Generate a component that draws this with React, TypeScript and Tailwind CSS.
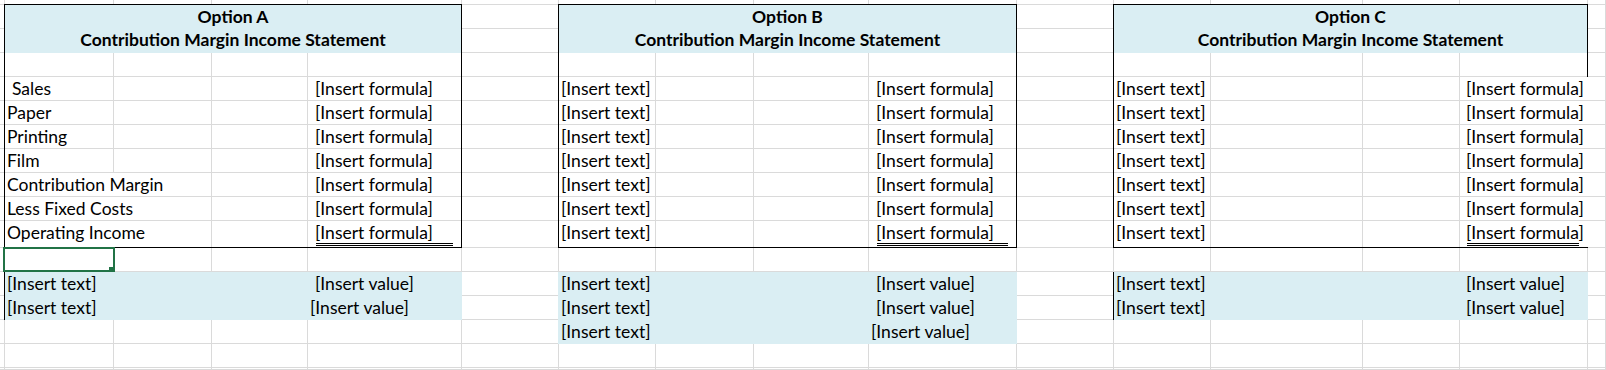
import React from "react";

const RS = [
  "",
  "row-start-1",
  "row-start-2",
  "row-start-3",
  "row-start-4",
  "row-start-5",
  "row-start-6",
  "row-start-7",
  "row-start-8",
  "row-start-9",
  "row-start-10",
  "row-start-11",
  "row-start-12",
  "row-start-13",
  "row-start-14",
  "row-start-15",
  "row-start-16",
  "row-start-17",
];
const CS = [
  "",
  "col-start-1",
  "col-start-2",
  "col-start-3",
  "col-start-4",
  "col-start-5",
  "col-start-6",
  "col-start-7",
  "col-start-8",
  "col-start-9",
  "col-start-10",
  "col-start-11",
  "col-start-12",
  "col-start-13",
  "col-start-14",
  "col-start-15",
  "col-start-16",
];

const GRID =
  "grid grid-cols-[5px_109px_98px_96px_154px_97px_97px_98px_115px_148px_97px_97px_152px_97px_128px_18px] grid-rows-[5px_24px_24px_24px_24px_24px_24px_24px_24px_24px_27px_24px_24px_24px_24px_24px_2px]";

function suppressed(r: number, c: number) {
  if (c === 2 && r >= 9 && r <= 11) return true;
  if (c === 15 && r >= 5 && r <= 11) return true;
  return false;
}

function Cell({
  r,
  c,
  pad,
  pb = "pb-[2px]",
  children,
}: {
  r: number;
  c: number;
  pad: string;
  pb?: string;
  children: React.ReactNode;
}) {
  return (
    <div className={`${RS[r]} ${CS[c]} flex items-end whitespace-nowrap ${pb} ${pad}`}>
      <span className="leading-[20px]">{children}</span>
    </div>
  );
}

function Underlined({
  r,
  c,
  pad,
  ul,
  children,
}: {
  r: number;
  c: number;
  pad: string;
  ul: string;
  children: React.ReactNode;
}) {
  return (
    <div className={`${RS[r]} ${CS[c]} flex flex-col justify-end whitespace-nowrap pb-[2px]`}>
      <span className={`leading-[20px] ${pad}`}>{children}</span>
      <div className={`h-[3px] border-y border-black mr-[9px] ${ul}`} />
    </div>
  );
}

function Header({ pos, title }: { pos: string; title: string }) {
  return (
    <div className={`${pos} row-start-2 row-end-4 -ml-px -mt-px bg-[#daeef3] flex flex-col font-bold`}>
      <div className="h-[25px] flex items-end justify-center pb-[2px]">
        <span className="leading-[20px]">{title}</span>
      </div>
      <div className="h-[24px] flex items-end justify-center pb-[3px]">
        <span className="leading-[20px]">Contribution Margin Income Statement</span>
      </div>
    </div>
  );
}

const labelsA = [
  "Sales",
  "Paper",
  "Printing",
  "Film",
  "Contribution Margin",
  "Less Fixed Costs",
];

export default function App() {
  const bg: React.ReactNode[] = [];
  for (let r = 1; r <= 17; r++) {
    for (let c = 1; c <= 16; c++) {
      bg.push(
        <div
          key={`${r}-${c}`}
          className={
            suppressed(r, c)
              ? "border-b border-[#dadada]"
              : "border-r border-b border-[#dadada]"
          }
        />
      );
    }
  }

  return (
    <div className="w-[1606px] h-[370px] overflow-hidden bg-white text-black text-[17.5px] font-[Lato,sans-serif]">
      <div className="grid">
        <div className={`col-start-1 row-start-1 ${GRID}`}>{bg}</div>
        <div className={`col-start-1 row-start-1 ${GRID}`}>
          {/* Headers */}
          <Header pos="col-start-2 col-end-6" title="Option A" />
          <Header pos="col-start-7 col-end-11" title="Option B" />
          <Header pos="col-start-12 col-end-16" title="Option C" />

          {/* Blue summary blocks */}
          <div className="col-start-2 col-end-6 row-start-13 row-end-15 -ml-px bg-[#daeef3] border-l border-black" />
          <div className="col-start-7 col-end-11 row-start-13 row-end-16 -ml-px bg-[#daeef3]" />
          <div className="col-start-12 col-end-16 row-start-13 row-end-15 -ml-px bg-[#daeef3] border-l border-black" />

          {/* Option A body */}
          {labelsA.map((l, i) => (
            <Cell key={`al${i}`} r={5 + i} c={2} pad={i === 0 ? "pl-[7px]" : "pl-[2px]"}>
              {l}
            </Cell>
          ))}
          <Cell r={11} c={2} pad="pl-[2px]" pb="pb-[5px]">
            Operating Income
          </Cell>
          {[0, 1, 2, 3, 4, 5].map((i) => (
            <Cell key={`af${i}`} r={5 + i} c={5} pad="pl-[7px]">
              [Insert formula]
            </Cell>
          ))}
          <Underlined r={11} c={5} pad="pl-[7px]" ul="ml-[8px]">
            [Insert formula]
          </Underlined>

          {/* Option B body */}
          {[0, 1, 2, 3, 4, 5].map((i) => (
            <Cell key={`bt${i}`} r={5 + i} c={7} pad="pl-[2px]">
              [Insert text]
            </Cell>
          ))}
          <Cell r={11} c={7} pad="pl-[2px]" pb="pb-[5px]">
            [Insert text]
          </Cell>
          {[0, 1, 2, 3, 4, 5].map((i) => (
            <Cell key={`bf${i}`} r={5 + i} c={10} pad="pl-[7px]">
              [Insert formula]
            </Cell>
          ))}
          <Underlined r={11} c={10} pad="pl-[7px]" ul="ml-[8px]">
            [Insert formula]
          </Underlined>

          {/* Option C body */}
          {[0, 1, 2, 3, 4, 5].map((i) => (
            <Cell key={`ct${i}`} r={5 + i} c={12} pad="pl-[2px]">
              [Insert text]
            </Cell>
          ))}
          <Cell r={11} c={12} pad="pl-[2px]" pb="pb-[5px]">
            [Insert text]
          </Cell>
          {[0, 1, 2, 3, 4, 5].map((i) => (
            <Cell key={`cf${i}`} r={5 + i} c={15} pad="pl-[6px]">
              [Insert formula]
            </Cell>
          ))}
          <Underlined r={11} c={15} pad="pl-[6px]" ul="ml-[7px]">
            [Insert formula]
          </Underlined>

          {/* Summary rows */}
          <Cell r={13} c={2} pad="pl-[2px]">[Insert text]</Cell>
          <Cell r={13} c={5} pad="pl-[7px]">[Insert value]</Cell>
          <Cell r={14} c={2} pad="pl-[2px]">[Insert text]</Cell>
          <Cell r={14} c={5} pad="pl-[2px]">[Insert value]</Cell>

          <Cell r={13} c={7} pad="pl-[2px]">[Insert text]</Cell>
          <Cell r={13} c={10} pad="pl-[7px]">[Insert value]</Cell>
          <Cell r={14} c={7} pad="pl-[2px]">[Insert text]</Cell>
          <Cell r={14} c={10} pad="pl-[7px]">[Insert value]</Cell>
          <Cell r={15} c={7} pad="pl-[2px]">[Insert text]</Cell>
          <Cell r={15} c={10} pad="pl-[2px]">[Insert value]</Cell>

          <Cell r={13} c={12} pad="pl-[2px]">[Insert text]</Cell>
          <Cell r={13} c={15} pad="pl-[6px]">[Insert value]</Cell>
          <Cell r={14} c={12} pad="pl-[2px]">[Insert text]</Cell>
          <Cell r={14} c={15} pad="pl-[6px]">[Insert value]</Cell>

          {/* Table outlines */}
          <div className="col-start-2 col-end-6 row-start-2 row-end-12 -ml-px -mt-px border border-black pointer-events-none" />
          <div className="col-start-7 col-end-11 row-start-2 row-end-12 -ml-px -mt-px border border-black pointer-events-none" />
          <div className="col-start-12 col-end-16 row-start-2 row-end-12 -ml-px -mt-px border-l border-t border-b border-black pointer-events-none" />
          <div className="col-start-15 col-end-16 row-start-2 row-end-5 -mt-px border-r border-black pointer-events-none" />

          {/* Selected cell */}
          <div className="col-start-2 row-start-12 relative -ml-[2px] -mt-px -mr-px border-2 border-[#217346]">
            <div className="absolute -right-[1px] -bottom-[2px] w-[5px] h-[5px] bg-[#217346]" />
          </div>
        </div>
      </div>
    </div>
  );
}
